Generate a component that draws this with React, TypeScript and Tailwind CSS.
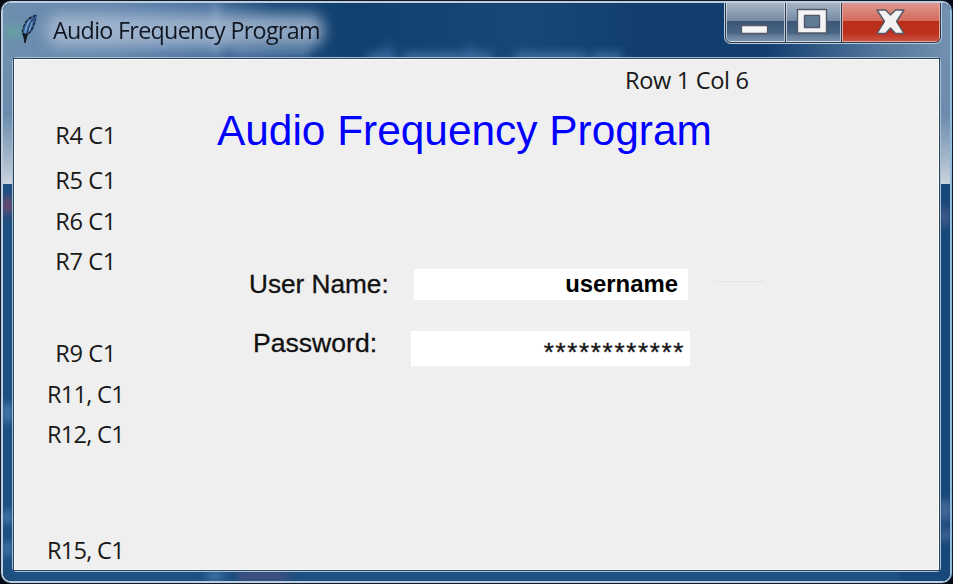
const ui = "font-['Open_Sans','Noto_Sans',sans-serif]";
const arial = "font-['Liberation_Sans',Arial,sans-serif]";

const gridLabels = [
  { text: 'R4 C1', gap: 'mt-[56px] tracking-[-0.4px]' },
  { text: 'R5 C1', gap: 'mt-[5px] tracking-[-0.4px]' },
  { text: 'R6 C1', gap: 'mt-[1px] tracking-[-0.4px]' },
  { text: 'R7 C1', gap: 'mt-0 tracking-[-0.4px]' },
  { text: 'R9 C1', gap: 'mt-[52px] tracking-[-0.4px]' },
  { text: 'R11, C1', gap: 'mt-[1px] tracking-[-0.75px]' },
  { text: 'R12, C1', gap: 'mt-0 tracking-[-0.75px]' },
  { text: 'R15, C1', gap: 'mt-[76px] tracking-[-0.75px]' },
];

// Desktop shapes seen blurred through the glass frame.
function Glass() {
  return (
    <svg className="absolute inset-0" width="947" height="579" viewBox="3 3 947 579" aria-hidden="true">
      <defs>
        <linearGradient id="top" x1="0" x2="1" y1="0" y2="0">
          <stop offset="0" stopColor="#6f8fb0" />
          <stop offset="0.12" stopColor="#6487ae" />
          <stop offset="0.22" stopColor="#4a719e" />
          <stop offset="0.29" stopColor="#174877" />
          <stop offset="0.37" stopColor="#11406f" />
          <stop offset="0.55" stopColor="#184776" />
          <stop offset="0.68" stopColor="#113e6e" />
          <stop offset="1" stopColor="#113f70" />
        </linearGradient>
        <linearGradient id="side" x1="0" x2="0" y1="0" y2="1">
          <stop offset="0" stopColor="#6f8fae" />
          <stop offset="0.45" stopColor="#6b8cae" />
          <stop offset="0.8" stopColor="#a5b7ca" />
          <stop offset="1" stopColor="#cbd4de" />
        </linearGradient>
        <linearGradient id="corner" x1="0" x2="1" y1="0" y2="0">
          <stop offset="0" stopColor="#7391b2" stopOpacity="0" />
          <stop offset="0.65" stopColor="#6d8bac" stopOpacity="0.75" />
          <stop offset="1" stopColor="#7593b3" />
        </linearGradient>
        <filter id="soft" x="-30%" y="-80%" width="160%" height="260%"><feGaussianBlur stdDeviation="4" /></filter>
        <filter id="glow" x="-10%" y="-60%" width="120%" height="220%"><feGaussianBlur stdDeviation="7" /></filter>
      </defs>
      <rect x="0" y="0" width="953" height="584" fill="#1d4f80" />
      <rect x="900" y="184" width="53" height="400" fill="#174879" />
      <rect x="0" y="0" width="953" height="58" fill="url(#top)" />
      <rect x="765" y="0" width="188" height="58" fill="url(#corner)" />
      <rect x="0" y="57" width="14" height="127" fill="url(#side)" />
      <rect x="939" y="57" width="14" height="127" fill="url(#side)" />
      <g filter="url(#soft)">
        <ellipse cx="14" cy="32" rx="13" ry="7" fill="#64aa9e" opacity="0.6" />
        <rect x="212" y="0" width="8" height="56" fill="#789bc4" opacity="0.6" />
        <rect x="234" y="46" width="76" height="12" fill="#6488b4" opacity="0.6" />
        <rect x="368" y="52" width="28" height="12" fill="#5381b8" opacity="0.6" />
        <rect x="404" y="52" width="88" height="12" fill="#5381b8" opacity="0.6" />
        <rect x="384" y="42" width="7" height="14" fill="#4777ac" opacity="0.4" />
        <rect x="466" y="44" width="8" height="13" fill="#4777ac" opacity="0.4" />
        <rect x="514" y="52" width="72" height="12" fill="#5381b8" opacity="0.6" />
        <rect x="592" y="52" width="30" height="12" fill="#5381b8" opacity="0.6" />
      </g>
      <rect x="46" y="14" width="278" height="33" rx="14" fill="#acbdd4" opacity="0.8" filter="url(#glow)" />
      <g filter="url(#soft)">
        <rect x="2" y="198" width="11" height="15" fill="#a24667" opacity="0.7" />
        <rect x="2" y="404" width="11" height="18" fill="#679bcd" opacity="0.6" />
        <rect x="2" y="511" width="11" height="12" fill="#679bcd" opacity="0.6" />
        <rect x="2" y="542" width="11" height="14" fill="#679bcd" opacity="0.5" />
        <rect x="938" y="208" width="12" height="18" fill="#4d5e91" opacity="0.8" />
        <rect x="939" y="500" width="12" height="20" fill="#8090c0" opacity="0.5" />
        <rect x="939" y="530" width="12" height="10" fill="#8090c0" opacity="0.5" />
        <rect x="207" y="572" width="16" height="8" fill="#679bcd" opacity="0.6" />
        <rect x="238" y="572" width="50" height="8" fill="#634f80" opacity="0.7" />
      </g>
    </svg>
  );
}

function Feather() {
  return (
    <svg width="18" height="32" viewBox="0 0 18 32" aria-hidden="true">
      <path d="M16 1 C10 2 4 7 3 12 C1 16 1 19 3.5 22 C9 21 12.5 16 13.5 11 C14.5 7 16 4 16 1Z" fill="#3b68a5" />
      <path d="M9 6 C6 10 5 14 4 19 M11 8 L8 17" stroke="#7fa8da" strokeWidth="1.3" fill="none" />
      <path d="M15.5 1.5 C10 2 4 7 3 12 C1 16 1 19 3 22 M7 20 C11 17 13 11 14.5 5" stroke="#1b2733" strokeWidth="1.4" fill="none" strokeDasharray="4 1" />
      <path d="M14 3 C8 9 6 18 4 29" stroke="#26384e" strokeWidth="1" fill="none" />
      <path d="M2 19 L4 29 L6.5 20" fill="#162028" stroke="#101820" strokeWidth="0.8" />
    </svg>
  );
}

function WindowButtons() {
  const edge = 'border border-t-0 border-white/50';
  return (
    <div className="flex h-[42px] w-[218px] rounded-b-[7px] border border-t-0 border-[#bdcbd9] bg-[#27394f] px-px pb-px">
      <button aria-label="Minimize" className={`${edge} flex w-[59px] items-end justify-center rounded-bl-[5px] bg-linear-to-b from-[#a9b8c8] from-0% via-[#7388a1] via-50% to-[#768da8] to-100% p-0`}>
        <svg className="block" width="57" height="38" viewBox="0 0 57 38">
          <defs>
            <linearGradient id="shade" x1="0" x2="0" y1="0" y2="1">
              <stop offset="0" stopColor="#34506f" stopOpacity="0.9" />
              <stop offset="0.6" stopColor="#3f5c7d" stopOpacity="0.8" />
              <stop offset="1" stopColor="#768da8" stopOpacity="0" />
            </linearGradient>
          </defs>
          <path d="M0 18H57V38H0Z" fill="url(#shade)" />
          <rect x="14.5" y="22.5" width="26" height="8" rx="1" fill="#f6f6f6" stroke="#535968" strokeWidth="1.3" />
        </svg>
      </button>
      <button aria-label="Maximize" className={`${edge} ml-px flex w-[55px] items-end justify-center bg-linear-to-b from-[#a9b8c8] from-0% via-[#7388a1] via-50% to-[#768da8] to-100% p-0`}>
        <svg className="block" width="53" height="38" viewBox="0 0 53 38">
          <path d="M0 18H53V38H0Z" fill="url(#shade)" />
          <path fillRule="evenodd" d="M10.5 6.5H39.5V30H10.5Z M17.5 12.5V24.5H32.5V12.5Z" fill="#f4f4f5" stroke="#535968" strokeWidth="1.4" strokeLinejoin="round" />
          <rect x="18.2" y="13.2" width="13.6" height="10.6" fill="#607a96" />
        </svg>
      </button>
      <button aria-label="Close" className="ml-px flex flex-1 items-end justify-center rounded-br-[5px] border border-t-0 border-[#e8a69c] bg-linear-to-b from-[#df9c92] from-0% via-[#d2695c] via-48% to-[#d26958] to-100% p-0">
        <svg className="block" width="96" height="38" viewBox="0 0 96 38">
          <defs>
            <linearGradient id="red" x1="0" x2="0" y1="0" y2="1">
              <stop offset="0" stopColor="#b92e1b" />
              <stop offset=".6" stopColor="#bd301e" />
              <stop offset="1" stopColor="#ca5241" />
            </linearGradient>
          </defs>
          <path d="M0 18H96V38H0Z" fill="url(#red)" />
          <path d="M34 7H42.5L47.5 12 52.5 7H61L53.5 18.5 61 30.5H52.5L47.5 25 42.5 30.5H34L41.5 18.5Z" fill="#f3f3f4" stroke="#555866" strokeWidth="1.4" strokeLinejoin="round" />
        </svg>
      </button>
    </div>
  );
}

export default function App() {
  return (
    <div className="h-[584px] w-[953px] overflow-hidden bg-[#030914] pt-px pl-px">
      <div className="relative h-[582px] w-[951px] overflow-hidden rounded-[10px] border-2 border-[#bdcddd] border-r-[#92bad9] shadow-[0_0_0_1px_#101c2c]">
        <Glass />
        <div className="relative flex h-full flex-col px-[9px] pb-[9px]">
          <header className="flex h-[54px] shrink-0 items-start">
            <div className="mt-[11px] ml-[9px]"><Feather /></div>
            <h1 className={`${ui} mt-[8px] ml-[14px] w-[270px] text-[23.3px] leading-[38px] tracking-[-0.7px] whitespace-nowrap text-[#101722]`}>Audio Frequency Program</h1>
            <div className="-mt-px -mr-px ml-auto"><WindowButtons /></div>
          </header>
          <main className="flex flex-1 rounded-[4px] border border-[#a9bfd2]">
            <div className="flex flex-1 border border-[#29445f] bg-[#efefef] shadow-[inset_0_0_0_1px_#fbfbfb]">
              <aside className={`${ui} w-[143px] shrink-0 text-center text-[23.6px] leading-[40px] text-[#181818]`}>
                {gridLabels.map(({ text, gap }) => (
                  <div key={text} className={`h-[40px] ${gap}`}>{text}</div>
                ))}
              </aside>
              <section className="flex min-w-0 flex-1 flex-col pl-px">
                <p className={`${ui} mt-[1px] ml-[467px] h-[40px] text-[23.6px] leading-[40px] tracking-[-0.35px] text-[#181818]`}>Row 1 Col 6</p>
                <h2 className={`${arial} mt-[5px] ml-[59px] h-[52px] text-[42.4px] leading-[52px] whitespace-nowrap text-[#0000ff]`}>Audio Frequency Program</h2>
                <div className="mt-[112px] ml-[91px] flex h-[31px] items-center">
                  <label className={`${arial} w-[165px] text-[26.2px] leading-[31px] text-[#111] [-webkit-text-stroke:0.3px_#111]`}>User Name:</label>
                  <div className={`${arial} h-[31px] w-[274px] bg-white pr-[10px] text-right text-[23.9px] leading-[30px] font-bold text-black`}>username</div>
                  <div className="mb-[6px] ml-[25px] h-px w-[51px] border-r border-[#c8c8c8] bg-[#e6e6e6]" />
                </div>
                <div className="mt-[31px] ml-[95px] flex h-[35px]">
                  <label className={`${arial} w-[158px] text-[26.6px] leading-[25px] text-[#111] [-webkit-text-stroke:0.3px_#111]`}>Password:</label>
                  <div className={`${arial} h-[35px] w-[279px] bg-white pr-[5px] text-right text-[26px] leading-[43px] tracking-[1.65px] text-[#111] [-webkit-text-stroke:0.4px_#222]`}>************</div>
                </div>
              </section>
            </div>
          </main>
        </div>
      </div>
    </div>
  );
}
